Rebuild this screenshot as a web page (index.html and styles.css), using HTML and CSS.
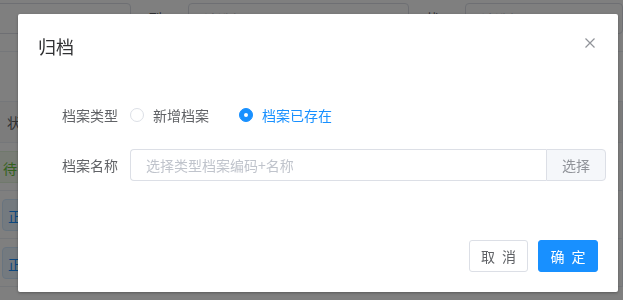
FILE: index.html
```html
<!DOCTYPE html>
<html lang="zh">
<head>
<meta charset="utf-8">
<title>归档</title>
<link rel="stylesheet" href="styles.css">
</head>
<body>
<div class="page">
  <div class="toolbar">
    <div class="tinput w1"></div>
    <span class="tlabel">型号</span>
    <div class="tinput w2">请选择</div>
    <span class="tlabel">状态</span>
    <div class="tinput w3">请选择</div>
  </div>
  <div class="band"></div>
  <div class="table">
    <div class="trow head"><div class="c c1">状态</div><div class="c c2"></div><div class="c c3"></div><div class="c c4"></div><div class="c c5"></div><div class="c c6">类型</div></div>
    <div class="trow"><div class="c c1"><span class="tag green">待归档</span></div><div class="c c2"></div><div class="c c3"></div><div class="c c4"></div><div class="c c5"></div><div class="c c6">型号</div></div>
    <div class="trow"><div class="c c1"><span class="tag blue">正常</span></div><div class="c c2"></div><div class="c c3"></div><div class="c c4"></div><div class="c c5"></div><div class="c c6 link">们</div></div>
    <div class="trow"><div class="c c1"><span class="tag blue">正常</span></div><div class="c c2"></div><div class="c c3"></div><div class="c c4"></div><div class="c c5"></div><div class="c c6">与</div></div>
  </div>
</div>

<div class="mask"></div>

<div class="dialog">
  <div class="dlg-header">
    <span class="dlg-title">归档</span>
    <button class="dlg-close" aria-label="关闭">
      <svg width="10" height="10" viewBox="0 0 10 10"><path d="M0.5 0.5 L9.5 9.5 M9.5 0.5 L0.5 9.5" stroke="#909399" stroke-width="1.2" fill="none"/></svg>
    </button>
  </div>
  <div class="dlg-body">
    <div class="form-item">
      <label class="form-label">档案类型</label>
      <div class="form-content">
        <label class="radio"><span class="radio-dot"></span><span class="radio-text">新增档案</span></label>
        <label class="radio checked"><span class="radio-dot"></span><span class="radio-text">档案已存在</span></label>
      </div>
    </div>
    <div class="form-item">
      <label class="form-label">档案名称</label>
      <div class="form-content">
        <div class="input-group">
          <input class="input" type="text" placeholder="选择类型档案编码+名称">
          <div class="addon">选择</div>
        </div>
      </div>
    </div>
  </div>
  <div class="dlg-footer">
    <button class="btn">取 消</button>
    <button class="btn primary">确 定</button>
  </div>
</div>
</body>
</html>
```

FILE: styles.css
```css
* { box-sizing: border-box; }
html, body { margin: 0; padding: 0; }
body {
  font-family: "Noto Sans CJK SC", "Noto Sans", sans-serif;
  font-size: 14px;
  color: #606266;
  background: #fff;
  width: 623px;
  height: 300px;
  overflow: hidden;
}
.page { width: 623px; }
.toolbar {
  display: flex;
  height: 36px;
  padding-top: 3px;
  align-items: flex-start;
}
.tinput {
  height: 31px;
  border: 1px solid #dcdfe6;
  border-radius: 4px;
  color: #c0c4cc;
  padding: 6px 15px;
  font-size: 14px;
  line-height: 18px;
}
.w1 { width: 143px; margin-left: -10px; }
.w2 { width: 224px; }
.w3 { width: 160px; }
.tlabel { width: 57px; padding: 6px 12px 0 17px; color: #606266; font-size: 14px; line-height: 18px; }
.band { height: 16px; border-bottom: 1px solid #ebeef5; }
.table { margin-top: 49px; }
.trow {
  display: flex;
  height: 48px;
  border-bottom: 1px solid #ebeef5;
}
.trow.head { height: 42px; background: #f8f8f9; border-top: 1px solid #ebeef5; }
.c { border-right: 1px solid #ebeef5; display: flex; align-items: center; padding-left: 7px; white-space: nowrap; overflow: hidden; }
.c1 { width: 73px; padding-left: 0; }
.head .c1 { padding-left: 7px; }
.c2 { width: 110px; }
.c3 { width: 160px; }
.c4 { width: 110px; }
.c5 { width: 165px; }
.c6 { width: 80px; padding-left: 0; margin-left: -1px; }
.link { color: #1890ff; }
.tag { display: inline-block; padding: 0 6px; height: 32px; line-height: 32px; border-radius: 4px; border: 1px solid; }
.tag.green { color: #67c23a; background: #f0f9eb; border-color: #e1f3d8; margin-left: -4px; }
.tag.blue { color: #1890ff; background: #e8f4ff; border-color: #d1e9ff; margin-left: 2px; padding-left: 5px; }

.mask {
  position: fixed;
  inset: 0;
  background: rgba(0, 0, 0, 0.5);
}
.dialog {
  position: absolute;
  left: 18px;
  top: 14px;
  width: 600px;
  height: 278px;
  background: #fff;
  border-radius: 2px;
  box-shadow: 0 1px 3px rgba(0, 0, 0, 0.3);
  display: flex;
  flex-direction: column;
}
.dlg-header {
  display: flex;
  justify-content: space-between;
  align-items: center;
  padding: 20px 20px 10px 20px;
  height: 54px;
}
.dlg-title {
  font-size: 18px;
  line-height: 24px;
  color: #303133;
}
.dlg-close {
  border: 0;
  background: none;
  padding: 0;
  width: 10px;
  height: 10px;
  margin-right: 3px;
  margin-top: -6px;
  display: flex;
  cursor: pointer;
}
.dlg-body {
  padding: 31px 12px 0 20px;
}
.form-item {
  display: flex;
  align-items: center;
  height: 32px;
  margin-bottom: 18px;
}
.form-item:last-child { margin-bottom: 0; }
.form-label {
  width: 92px;
  padding-right: 12px;
  text-align: right;
  color: #606266;
  line-height: 32px;
}
.form-content {
  flex: 1;
  display: flex;
  align-items: center;
}
.radio {
  display: inline-flex;
  align-items: center;
  margin-right: 30px;
  color: #606266;
  cursor: pointer;
}
.radio-dot {
  width: 14px;
  height: 14px;
  border: 1px solid #dcdfe6;
  border-radius: 50%;
  background: #fff;
  position: relative;
}
.radio-text { padding-left: 9px; line-height: 20px; }
.radio.checked { color: #1890ff; }
.radio.checked .radio-dot {
  background: #1890ff;
  border-color: #1890ff;
}
.radio.checked .radio-dot::after {
  content: "";
  position: absolute;
  width: 4px;
  height: 4px;
  left: 4px;
  top: 4px;
  border-radius: 50%;
  background: #fff;
}
.input-group {
  display: flex;
  width: 100%;
  height: 32px;
}
.input {
  flex: 1;
  min-width: 0;
  height: 32px;
  border: 1px solid #dcdfe6;
  border-right: 0;
  border-radius: 4px 0 0 4px;
  padding: 0 15px;
  font-family: inherit;
  font-size: 14px;
  color: #606266;
  outline: none;
}
.input::placeholder { color: #c0c4cc; }
.addon {
  width: 60px;
  height: 32px;
  background: #f5f7fa;
  border: 1px solid #dcdfe6;
  border-radius: 0 4px 4px 0;
  color: #909399;
  display: flex;
  align-items: center;
  justify-content: center;
}
.dlg-footer {
  display: flex;
  justify-content: flex-end;
  gap: 10px;
  margin-top: auto;
  padding: 10px 20px 20px;
}
.btn {
  height: 32px;
  width: 59px;
  border: 1px solid #dcdfe6;
  border-radius: 3px;
  background: #fff;
  color: #606266;
  font-family: inherit;
  font-size: 14px;
  word-spacing: 4px;
  padding: 0;
  cursor: pointer;
}
.btn.primary {
  width: 60px;
  background: #1890ff;
  border-color: #1890ff;
  color: #fff;
}
```
